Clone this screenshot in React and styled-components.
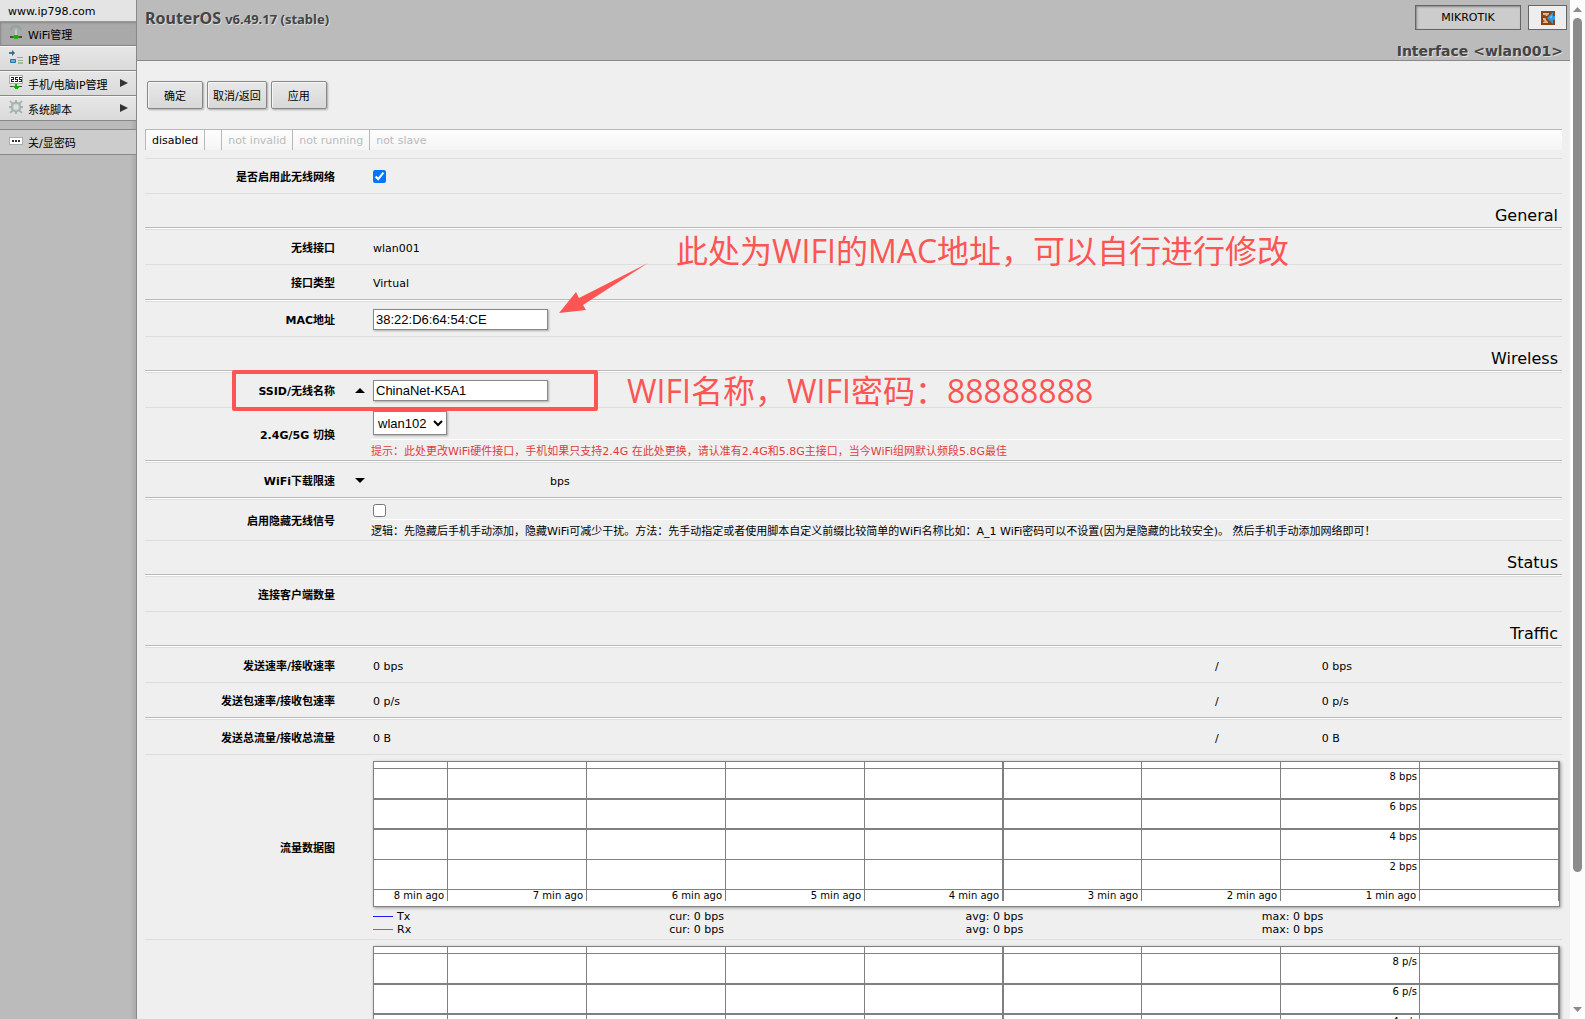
import React from 'react'
import styled, { createGlobalStyle } from 'styled-components'

const UI_FONT = "'DejaVu Sans', Verdana, 'Noto Sans CJK SC', sans-serif"
const FIELD_FONT = "'Liberation Sans', Arial, 'Noto Sans CJK SC', sans-serif"
const NOTE_FONT = "'Open Sans', 'Noto Sans CJK SC', sans-serif"
const BORDER = '#888888'
const LINE = '#dddddd'
const LINE_DARK = '#b8b8b8'
const NOTE = '#fc5554'

const GlobalStyle = createGlobalStyle`
  * {
    box-sizing: border-box;
  }

  body {
    margin: 0;
    background: #efefef;
    font-family: ${UI_FONT};
    font-size: 11px;
    line-height: 16px;
    color: #000;
  }
`

const Page = styled.div`
  display: flex;
  height: 100vh;
`

const Sidebar = styled.nav`
  flex: 0 0 137px;
  background: linear-gradient(to right, #bbb 130px, #aaa);
  border-right: 1px solid ${BORDER};
`

const Site = styled.a`
  display: block;
  height: 21px;
  padding: 4px 8px 0;
  background: #e4e4e4;
  color: #000;
  text-decoration: none;
`

const MenuItem = styled.a`
  display: flex;
  align-items: flex-start;
  gap: 5px;
  height: 25px;
  padding: 3px 8px 0 9px;
  color: #000;
  text-decoration: none;
  border-bottom: 1px solid ${BORDER};
  border-top: ${props => props.$edged ? `1px solid ${BORDER}` : '1px solid #f4f4f4'};
  background: ${props => props.$active ? '#a9a9a9' : 'linear-gradient(#e6e6e6, #dadada)'};

  ${props => props.$active && 'box-shadow: inset 1px 1px 2px #888; border-top-color: #999;'}
`

const MenuLabel = styled.span`
  flex: 1;
  padding-top: 3px;
  white-space: nowrap;
`

const MenuArrow = styled.svg`
  margin-top: 4px;
`

const MenuGap = styled.div`
  height: 8px;
`

const PasswordToggle = styled(MenuItem)`
  height: 26px;
  background: #ccc;
`

const Main = styled.main`
  flex: 1;
  min-width: 0;
  overflow-x: hidden;
  overflow-y: auto;
  scrollbar-width: none;
`

const Header = styled.header`
  display: flex;
  justify-content: space-between;
  height: 61px;
  padding: 5px 3px 0 8px;
  background: #bbb;
  border-bottom: 1px solid ${BORDER};
  color: #444;
  text-shadow: 1px 1px 0 #ddd;
`

const Product = styled.h1`
  margin: 0;
  font-size: 16px;
  line-height: 26px;
  font-family: 'Noto Sans', sans-serif;

  small {
    font-size: 13px;
  }
`

const HeaderSide = styled.div`
  display: flex;
  flex-direction: column;
  justify-content: space-between;
  align-items: flex-end;
`

const HeaderButtons = styled.div`
  display: flex;
  gap: 7px;
`

const HeaderButton = styled.button`
  width: ${props => props.$wide ? '106px' : '39px'};
  height: 25px;
  display: flex;
  align-items: center;
  justify-content: center;
  padding: 0;
  border: 1px solid #666;
  font: 11px ${UI_FONT};
  color: #000;
  background: ${props => props.$wide ? '#ccc' : '#eee'};
  box-shadow: ${props => props.$wide ? 'inset 1px 1px 2px #888' : 'none'};
`

const PageTitle = styled.h2`
  margin: 0;
  padding-right: 4px;
  font-size: 14px;
  line-height: 18px;
`

const Content = styled.div`
  position: relative;
  padding: 20px 8px 0;
`

const Toolbar = styled.div`
  display: flex;
  gap: 4px;
  padding: 0 2px;
`

const ToolButton = styled.button`
  min-width: 56px;
  height: 28px;
  padding: 0 5px;
  border: 1px solid ${BORDER};
  border-radius: 2px;
  background: linear-gradient(#e8e8e8, #d8d8d8);
  box-shadow: inset 1px 1px 0 #f6f6f6, 1px 1px 2px #aaa;
  font: 11px ${UI_FONT};
  color: #000;
`

const StatusBar = styled.div`
  display: flex;
  height: 21px;
  margin: 20px 0 8px;
  border-top: 1px solid ${LINE_DARK};
  background: linear-gradient(#fdfdfd, #f5f5f5);
`

const Status = styled.div`
  min-width: 17px;
  padding: 3px 6px 0;
  border-left: 1px solid ${LINE_DARK};
  color: ${props => props.$on ? '#000' : '#bbb'};
`

const Row = styled.div`
  display: grid;
  grid-template-columns: 190px 38px 1fr;
  align-items: center;
  min-height: 35px;
  border-top: 1px solid ${LINE};
`

const Divider = styled.div`
  height: 2px;
  border-top: 1px solid ${LINE_DARK};
  background: #fff;
`

const SectionTitle = styled.h3`
  height: 34px;
  margin: 0;
  padding: 12px 4px 0 0;
  border-top: 1px solid ${LINE};
  font-size: 16px;
  font-weight: normal;
  line-height: 20px;
  text-align: right;
`

const Label = styled.label`
  padding-top: 3px;
  font-weight: bold;
  text-align: right;
`

const Toggle = styled.button`
  display: flex;
  justify-self: end;
  padding: 0;
  margin-right: 8px;
  border: none;
  background: none;
`

const Value = styled.div`
  grid-column: 3;
  min-width: 0;
`

const TextValue = styled(Value)`
  padding-top: 3px;
`

const Pair = styled(TextValue)`
  display: grid;
  grid-template-columns: 71% 9% 20%;
  padding-right: 3px;
`

const Rate = styled(TextValue)`
  padding-left: 177px;
`

const TextInput = styled.input`
  display: block;
  width: 175px;
  height: 21px;
  padding: 0 2px;
  border: 1px solid ${BORDER};
  box-shadow: 1px 1px 2px #aaa;
  font: 13px ${FIELD_FONT};
`

const SelectBox = styled.select`
  display: block;
  width: 74px;
  height: 24px;
  margin: 3px 0 4px;
  border: 1px solid ${BORDER};
  background: #fff;
  box-shadow: 1px 1px 2px #aaa;
  font: 13px ${FIELD_FONT};
`

const Check = styled.input`
  display: block;
  width: 13px;
  height: 13px;
  margin: ${props => props.$hinted ? '4px 0 2px' : '0'};
`

const Hint = styled.div`
  height: 21px;
  margin-left: -2px;
  padding-top: 4px;
  border-top: 1px solid #fff;
  white-space: nowrap;
  color: ${props => props.$warn ? '#e03c3c' : '#000'};
`

const GraphBox = styled.div`
  padding: 6px 0 3px;
  margin-right: 2px;
`

const Chart = styled.svg`
  display: block;
  width: 100%;
  height: auto;
  box-shadow: 1px 1px 3px #999;
  background: #fff;
`

const Legend = styled.div`
  display: grid;
  grid-template-columns: repeat(4, 1fr);
  padding: 3px 2px 0 0;
  line-height: 13px;
`

const Series = styled.span`
  display: flex;
  align-items: center;
  gap: 4px;

  &::before {
    content: '';
    width: 20px;
    height: 1px;
    background: ${props => props.$color};
  }
`

const Scrollbar = styled.div`
  flex: 0 0 15px;
  display: flex;
  flex-direction: column;
  align-items: center;
  justify-content: space-between;
  padding: 7px 0;
  background: #fcfcfc;
`

const Thumb = styled.div`
  width: 9px;
  height: 85%;
  margin: 6px 0 auto;
  border-radius: 5px;
  background: #8b8b8b;
`

const Note = styled.div`
  position: absolute;
  top: ${props => props.$top}px;
  left: ${props => props.$left}px;
  font: 32px/40px ${NOTE_FONT};
  color: ${NOTE};
  white-space: nowrap;
  pointer-events: none;
`

const NoteFrame = styled.div`
  position: absolute;
  top: 309px;
  left: 95px;
  width: 366px;
  height: 41px;
  border: 4px solid ${NOTE};
  border-radius: 2px;
  pointer-events: none;
`

const NoteArrow = styled.svg`
  position: absolute;
  top: 201px;
  left: 421px;
  pointer-events: none;
`

const Triangle = ({ points, width, height, fill = '#000' }) => (
  <svg width={width} height={height} aria-hidden='true'>
    <polygon points={points} fill={fill} />
  </svg>
)

const WifiIcon = () => (
  <svg width='14' height='14' viewBox='0 0 14 14' fill='none'>
    <path d='M2 5Q3 1 7 1T12 5' stroke='#94a39c' strokeWidth='2' />
    <path d='M5 5Q7 3 9 5' stroke='#b0bab5' />
    <path d='M7 5V10' stroke='#c4ccc8' strokeWidth='2' />
    <path d='M1 12H13' stroke='#4b4b4b' strokeWidth='2' />
    <path d='M5 10H9V14H5Z' fill='#27b010' />
    <path d='M4 11H10V13H4Z' fill='#1fa80c' />
  </svg>
)

const IpIcon = () => (
  <svg width='14' height='14' viewBox='0 0 14 14' fill='none'>
    <path d='M0 3H4' stroke='#3f7ba3' strokeWidth='2' />
    <path d='M3 0L6 3L3 6Z' fill='#2c6a94' />
    <path d='M1.5 9.5H6.5V12.5H1.5Z' fill='#57b5ea' stroke='#2477b0' />
    <path d='M8 7.5H14M9 10.5H14' stroke='#a0a8a4' />
    <path d='M9 13H14' stroke='#35b82b' />
  </svg>
)

const AddressIcon = () => (
  <svg width='14' height='14' viewBox='0 0 14 14' fill='none' shapeRendering='crispEdges'>
    <rect x='0.5' y='0.5' width='13' height='8' fill='#fff' stroke='#a5b0aa' />
    <path d='M2 2.5H4.5V4.5H2.5V6.5H5M9 2.5H6.5V4.5H8.5V6.5H6M13 2.5H10.5V4.5H12.5V6.5H10' stroke='#222' />
    <path d='M1 11.5H13' stroke='#4b4b4b' />
    <path d='M6 9H8V11H10V12L8 14H6L4 12V11H6Z' fill='#1fa80c' />
  </svg>
)

const GearIcon = () => (
  <svg width='14' height='14' viewBox='0 0 14 14' fill='none' stroke='#aab8b2'>
    <circle cx='7' cy='7' r='4' strokeWidth='2' />
    <path d='M7 0V3M7 11V14M0 7H3M11 7H14M1 1L4 4M13 1L10 4M1 13L4 10M13 13L10 10' strokeWidth='2' />
    <circle cx='7' cy='7' r='5' stroke='#8fa099' strokeWidth='0.5' />
    <circle cx='7' cy='7' r='3' fill='#dcdfdd' stroke='#c8d0cc' />
  </svg>
)

const PasswordIcon = () => (
  <svg width='14' height='14' viewBox='0 0 14 14' shapeRendering='crispEdges'>
    <rect x='0.5' y='4.5' width='13' height='7' fill='#fff' stroke='#a5b0aa' />
    <path d='M3 7h2v2H3zM6 7h2v2H6zM9 7h2v2H9z' fill='#333' />
  </svg>
)

const LogoutIcon = () => (
  <svg width='14' height='14' viewBox='0 0 14 14'>
    <rect width='14' height='14' fill='#8b4513' />
    <path d='M2 2H8V3L6 5H5L4 4H2ZM2 7H4L5 8V9L7 11V12H2V11L4 10L2 9Z' fill='#e3b391' />
    <path d='M6 7L12 1V5H14V9H12V13Z' fill='#2f9be6' />
    <path d='M8 7L11 4V7Z' fill='#6cc0f5' />
  </svg>
)

const MINUTES = [8, 7, 6, 5, 4, 3, 2, 1]
const MINUTE_LINES = [74, 213, 352, 491, 629, 768, 907, 1046]
const LEVELS = [8, 6, 4, 2]

const Graph = ({ unit }) => (
  <GraphBox>
    <Chart viewBox='0 0 1187 146' role='img' aria-label={`Traffic, ${unit}`}>
      <g fill='#808080' shapeRendering='crispEdges'>
        <rect x='0' y='7' width='1187' height='1' />
        <rect x='0' y='37' width='1187' height='2' />
        <rect x='0' y='67' width='1187' height='2' />
        <rect x='0' y='98' width='1187' height='1' />
        <rect x='0' y='128' width='1187' height='1' />
        {MINUTE_LINES.map((x, i) => (
          <rect key={x} x={x} y='0' width={i === 4 ? 2 : 1} height='140' />
        ))}
        <rect x='1185' y='0' width='1' height='140' />
      </g>
      <rect x='0.5' y='0.5' width='1186' height='145' fill='none' stroke='#808080' />
      <g fontFamily={UI_FONT} fontSize='10' textAnchor='end'>
        {LEVELS.map((l, i) => (
          <text key={l} x='1044' y={19 + i * 30}>{l} {unit}</text>
        ))}
        {MINUTES.map((m, i) => (
          <text key={m} x={MINUTE_LINES[i] - 3} y='138'>{m} min ago</text>
        ))}
      </g>
    </Chart>
    <Legend>
      {[['Tx', '#1a1aff'], ['Rx', '#ff1aff']].map(([name, color]) => (
        <React.Fragment key={name}>
          <Series $color={color}>{name}</Series>
          <span>cur: 0 {unit}</span>
          <span>avg: 0 {unit}</span>
          <span>max: 0 {unit}</span>
        </React.Fragment>
      ))}
    </Legend>
  </GraphBox>
)

const RightArrow = () => (
  <MenuArrow width='8' height='8' aria-hidden='true'>
    <polygon points='0,0 8,4 0,8' fill='#333' />
  </MenuArrow>
)

const App = () => (
  <Page>
    <GlobalStyle />
    <Sidebar>
      <Site href='#home'>www.ip798.com</Site>
      <MenuItem href='#wifi' $active><WifiIcon /><MenuLabel>WiFi管理</MenuLabel></MenuItem>
      <MenuItem href='#ip'><IpIcon /><MenuLabel>IP管理</MenuLabel></MenuItem>
      <MenuItem href='#devices'><AddressIcon /><MenuLabel>手机/电脑IP管理</MenuLabel><RightArrow /></MenuItem>
      <MenuItem href='#scripts'><GearIcon /><MenuLabel>系统脚本</MenuLabel><RightArrow /></MenuItem>
      <MenuGap />
      <PasswordToggle href='#password' $edged><PasswordIcon /><MenuLabel>关/显密码</MenuLabel></PasswordToggle>
    </Sidebar>
    <Main>
      <Header>
        <Product>RouterOS <small>v6.49.17 (stable)</small></Product>
        <HeaderSide>
          <HeaderButtons>
            <HeaderButton $wide>MIKROTIK</HeaderButton>
            <HeaderButton aria-label='Logout'><LogoutIcon /></HeaderButton>
          </HeaderButtons>
          <PageTitle>Interface &lt;wlan001&gt;</PageTitle>
        </HeaderSide>
      </Header>
      <Content>
        <Toolbar>
          <ToolButton>确定</ToolButton>
          <ToolButton>取消/返回</ToolButton>
          <ToolButton>应用</ToolButton>
        </Toolbar>
        <StatusBar>
          <Status $on>disabled</Status>
          <Status />
          <Status>not invalid</Status>
          <Status>not running</Status>
          <Status>not slave</Status>
        </StatusBar>
        <Row>
          <Label htmlFor='enabled'>是否启用此无线网络</Label>
          <Value><Check id='enabled' type='checkbox' defaultChecked /></Value>
        </Row>
        <SectionTitle>General</SectionTitle>
        <Divider />
        <Row><Label as='span'>无线接口</Label><TextValue>wlan001</TextValue></Row>
        <Row><Label as='span'>接口类型</Label><TextValue>Virtual</TextValue></Row>
        <Divider />
        <Row>
          <Label htmlFor='mac'>MAC地址</Label>
          <Value><TextInput id='mac' defaultValue='38:22:D6:64:54:CE' /></Value>
        </Row>
        <SectionTitle>Wireless</SectionTitle>
        <Divider />
        <Row>
          <Label htmlFor='ssid'>SSID/无线名称</Label>
          <Toggle aria-label='Collapse'><Triangle width='10' height='5' points='0,5 5,0 10,5' /></Toggle>
          <Value><TextInput id='ssid' defaultValue='ChinaNet-K5A1' /></Value>
        </Row>
        <Row>
          <Label htmlFor='band'>2.4G/5G 切换</Label>
          <Value>
            <SelectBox id='band'><option>wlan102</option></SelectBox>
            <Hint $warn>提示：此处更改WiFi硬件接口，手机如果只支持2.4G 在此处更换，请认准有2.4G和5.8G主接口，当今WiFi组网默认频段5.8G最佳</Hint>
          </Value>
        </Row>
        <Divider />
        <Row>
          <Label as='span'>WiFi下载限速</Label>
          <Toggle aria-label='Expand'><Triangle width='10' height='5' points='0,0 10,0 5,5' /></Toggle>
          <Rate>bps</Rate>
        </Row>
        <Divider />
        <Row>
          <Label htmlFor='hidden'>启用隐藏无线信号</Label>
          <Value>
            <Check id='hidden' type='checkbox' $hinted />
            <Hint>逻辑：先隐藏后手机手动添加，隐藏WiFi可减少干扰。方法：先手动指定或者使用脚本自定义前缀比较简单的WiFi名称比如：A_1 WiFi密码可以不设置(因为是隐藏的比较安全)。 然后手机手动添加网络即可！</Hint>
          </Value>
        </Row>
        <SectionTitle>Status</SectionTitle>
        <Divider />
        <Row><Label as='span'>连接客户端数量</Label></Row>
        <SectionTitle>Traffic</SectionTitle>
        <Divider />
        <Row>
          <Label as='span'>发送速率/接收速率</Label>
          <Pair><span>0 bps</span><span>/</span><span>0 bps</span></Pair>
        </Row>
        <Row>
          <Label as='span'>发送包速率/接收包速率</Label>
          <Pair><span>0 p/s</span><span>/</span><span>0 p/s</span></Pair>
        </Row>
        <Divider />
        <Row>
          <Label as='span'>发送总流量/接收总流量</Label>
          <Pair><span>0 B</span><span>/</span><span>0 B</span></Pair>
        </Row>
        <Row>
          <Label as='span'>流量数据图</Label>
          <Value><Graph unit='bps' /></Value>
        </Row>
        <Row>
          <Value><Graph unit='p/s' /></Value>
        </Row>

        <Note $top={170} $left={539}>此处为WIFI的MAC地址，可以自行进行修改</Note>
        <Note $top={310} $left={490}>WIFI名称，WIFI密码：88888888</Note>
        <NoteFrame />
        <NoteArrow width='92' height='54' viewBox='0 0 92 54'>
          <path d='M90 1L21 36L18 30L1 51L28 48L25 43Z' fill={NOTE} />
        </NoteArrow>
      </Content>
    </Main>
    <Scrollbar>
      <Triangle width='9' height='5' points='0,5 4.5,0 9,5' fill='#8b8b8b' />
      <Thumb />
      <Triangle width='9' height='5' points='0,0 9,0 4.5,5' fill='#8b8b8b' />
    </Scrollbar>
  </Page>
)

export default App
